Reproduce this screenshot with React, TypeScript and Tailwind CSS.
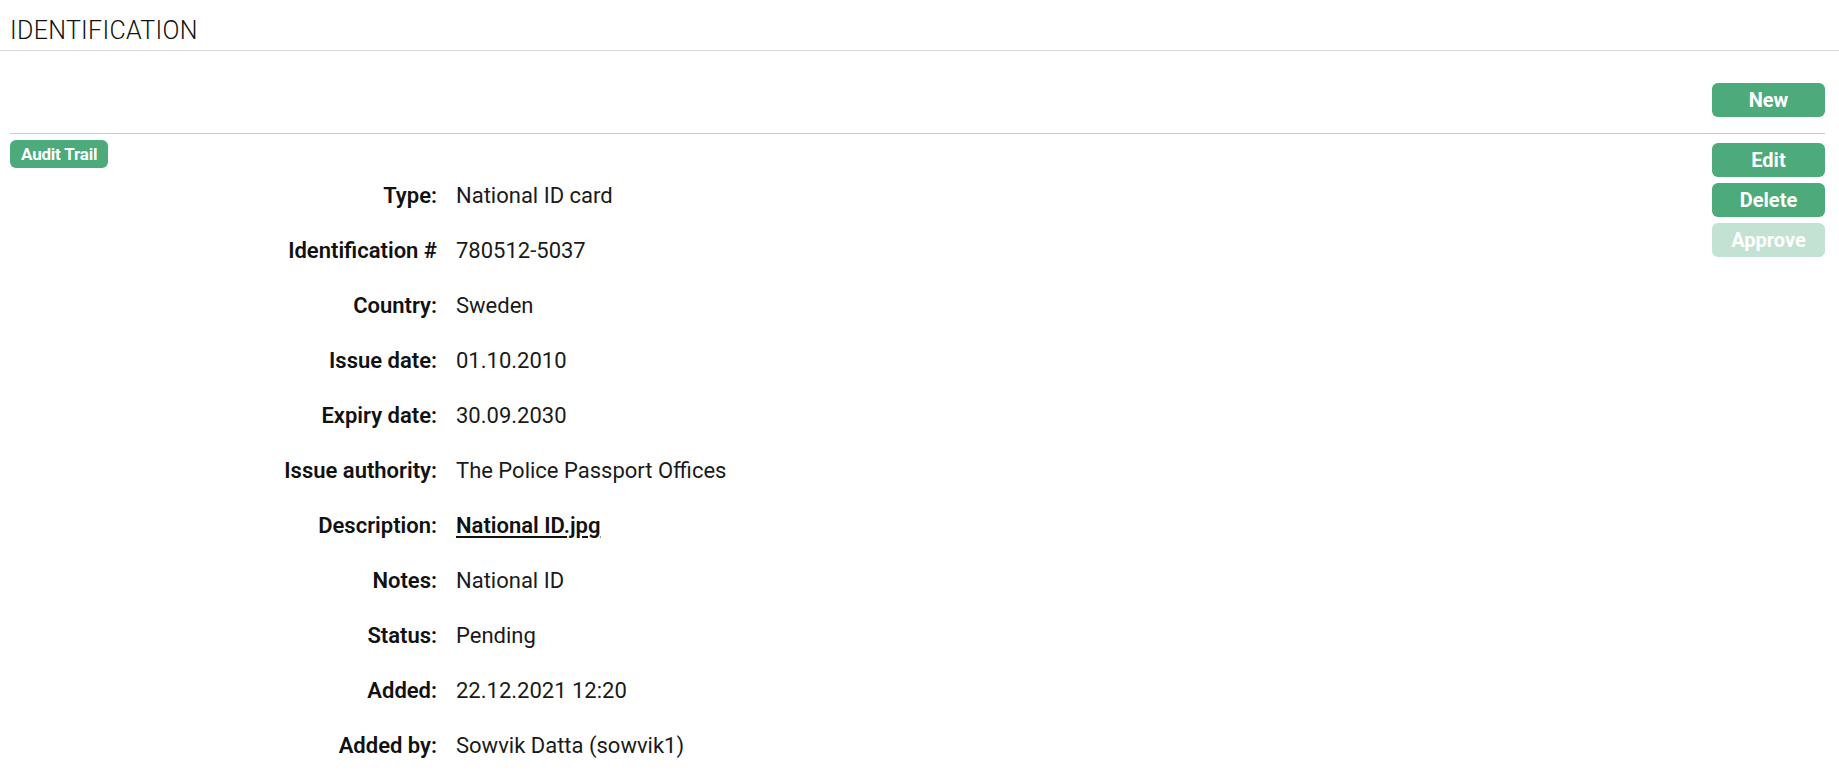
const rows: { label: string; value: string; link?: boolean }[] = [
	{ label: "Type:", value: "National ID card" },
	{ label: "Identification #", value: "780512-5037" },
	{ label: "Country:", value: "Sweden" },
	{ label: "Issue date:", value: "01.10.2010" },
	{ label: "Expiry date:", value: "30.09.2030" },
	{ label: "Issue authority:", value: "The Police Passport Offices" },
	{ label: "Description:", value: "National ID.jpg", link: true },
	{ label: "Notes:", value: "National ID" },
	{ label: "Status:", value: "Pending" },
	{ label: "Added:", value: "22.12.2021 12:20" },
	{ label: "Added by:", value: "Sowvik Datta (sowvik1)" },
];

function ActionButton({ children, disabled }: { children: string; disabled?: boolean }) {
	return (
		<button
			className={
				disabled
					? "w-[113px] h-[34px] rounded-[6px] bg-[#c3e2d3] text-white font-bold text-[20px] leading-none"
					: "w-[113px] h-[34px] rounded-[6px] bg-[#4caa7b] text-white font-bold text-[20px] leading-none"
			}
		>
			{children}
		</button>
	);
}

export default function App() {
	return (
		<div className="w-[1839px] min-h-[771px] bg-white text-[#111]" style={{ fontFamily: "Roboto, 'Liberation Sans', sans-serif" }}>
			{/* page title */}
			<header className="h-[51px] border-b border-[#d9d9d9] px-[10px] pt-[13px]">
				<h1 className="text-[25px] leading-[36px] font-light tracking-[0.3px] text-[#111]">IDENTIFICATION</h1>
			</header>

			<div className="pl-[10px] pr-[14px]">
				{/* toolbar */}
				<div className="flex justify-end pt-[32px] pb-[16px] border-b border-[#cccccc]">
					<ActionButton>New</ActionButton>
				</div>

				<div className="flex justify-between">
					{/* details */}
					<div className="pt-[6px]">
						<button className="h-[28px] px-[11px] rounded-[6px] bg-[#4caa7b] text-white font-bold text-[17px] leading-none tracking-[-0.2px]">
							Audit Trail
						</button>
						<div className="flex flex-col">
							{rows.map((r) => (
								<div key={r.label} className="flex items-center h-[55px] text-[22px] leading-[30px]">
									<div className="w-[427px] text-right font-semibold text-[#111]">{r.label}</div>
									<div className="pl-[19px] text-[#1a1a1a]">
										{r.link ? (
											<a href="#" className="font-semibold underline underline-offset-[3px] decoration-[2px] text-[#111]">
												{r.value}
											</a>
										) : (
											r.value
										)}
									</div>
								</div>
							))}
						</div>
					</div>

					{/* row actions */}
					<div className="flex flex-col gap-[6px] pt-[9px]">
						<ActionButton>Edit</ActionButton>
						<ActionButton>Delete</ActionButton>
						<ActionButton disabled>Approve</ActionButton>
					</div>
				</div>
			</div>
		</div>
	);
}
